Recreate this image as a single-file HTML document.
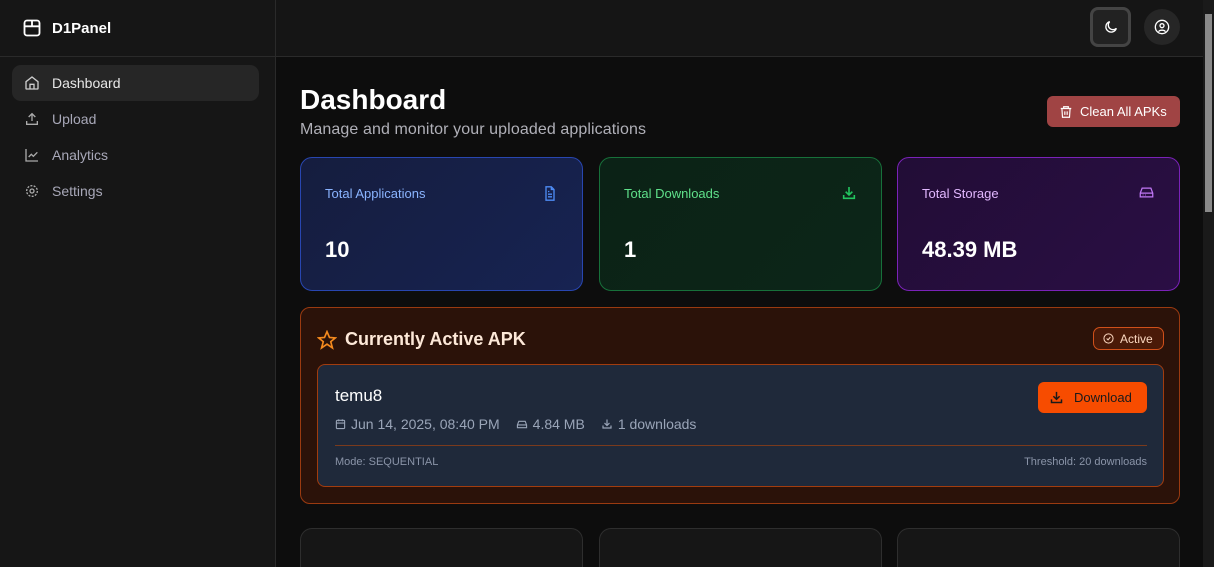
<!DOCTYPE html>
<html><head><meta charset="utf-8"><style>
*{box-sizing:border-box;margin:0;padding:0}
html,body{width:1214px;height:567px;overflow:hidden}
body{background:#0d0d0d;font-family:"Liberation Sans",sans-serif;color:#fff;position:relative}
svg{display:block}
.side{position:absolute;left:0;top:0;width:276px;height:567px;background:#161616;border-right:1px solid #2a2a2a}
.logo{height:57px;border-bottom:1px solid #2a2a2a;display:flex;align-items:center;padding-left:22px;font-weight:bold;font-size:15px;gap:10px}
.nav{padding:8px 12px}
.ni{height:36px;display:flex;align-items:center;padding-left:12px;gap:12px;font-size:14px;color:#a8a8b8;border-radius:9px}
.ni.act{background:#262626;color:#e8e8e8;width:247px}
.top{position:absolute;left:276px;top:0;right:11px;height:57px;background:#151515;border-bottom:1px solid #2a2a2a}
.sb{position:absolute;right:0;top:0;width:11px;height:567px;background:#1a1a1a}
.sb div{position:absolute;left:2px;top:14px;width:7px;height:198px;background:#8a8a8a}
.card{position:absolute;top:157px;width:283px;height:134px;border-radius:12px;padding:28px 24px}
.card .l{font-size:13px}
.card .v{font-size:22px;font-weight:bold;margin-top:36px}
.card svg{position:absolute;right:24px;top:27px}
.meta{display:flex;align-items:center;gap:5px}
</style></head><body>
<div class="side">
 <div class="logo"><svg width="20" height="20" viewBox="0 0 24 24" fill="none" stroke="#fff" stroke-width="2.2"><rect x="3" y="3" width="18" height="18" rx="3"/><path d="M3 10h18M12 3v7"/></svg>D1Panel</div>
 <div class="nav">
  <div class="ni act"><svg width="16" height="16" viewBox="0 0 24 24" fill="none" stroke="#ccc" stroke-width="2"><path d="M3 10l9-7 9 7v10a1 1 0 0 1-1 1H4a1 1 0 0 1-1-1z"/><path d="M9 21v-7h6v7"/></svg>Dashboard</div>
  <div class="ni"><svg width="16" height="16" viewBox="0 0 24 24" fill="none" stroke="#aaa" stroke-width="2"><path d="M4 15v5h16v-5M12 15V4M7 9l5-5 5 5"/></svg>Upload</div>
  <div class="ni"><svg width="16" height="16" viewBox="0 0 24 24" fill="none" stroke="#aaa" stroke-width="2"><path d="M3 3v18h18M7 15l4-4 3 3 6-6"/></svg>Analytics</div>
  <div class="ni"><svg width="16" height="16" viewBox="0 0 24 24" fill="none" stroke="#aaa" stroke-width="2"><circle cx="12" cy="12" r="3"/><circle cx="12" cy="12" r="8" stroke-dasharray="3 2"/></svg>Settings</div>
 </div>
</div>
<div class="top">
 <div style="position:absolute;left:814px;top:7px;width:41px;height:40px;border:3px solid #444;border-radius:8px;background:#222;display:flex;align-items:center;justify-content:center"><svg width="16" height="16" viewBox="0 0 24 24" fill="none" stroke="#fff" stroke-width="2"><path d="M20 14A8 8 0 1 1 10 4a6 6 0 0 0 10 10z"/></svg></div>
 <div style="position:absolute;left:868px;top:9px;width:36px;height:36px;border-radius:50%;background:#262626;display:flex;align-items:center;justify-content:center"><svg width="16" height="16" viewBox="0 0 24 24" fill="none" stroke="#fff" stroke-width="2"><circle cx="12" cy="12" r="10"/><circle cx="12" cy="10" r="3"/><path d="M7 19c1-3 9-3 10 0"/></svg></div>
</div>
<div class="sb"><div></div></div>
<div style="position:absolute;left:300px;top:84px;font-size:28px;font-weight:bold">Dashboard</div>
<div style="position:absolute;left:300px;top:121px;font-size:16px;color:#b0b0b8;letter-spacing:0.1px">Manage and monitor your uploaded applications</div>
<div style="position:absolute;left:1047px;top:96px;width:133px;height:31px;background:#a04444;border-radius:6px;display:flex;align-items:center;padding-left:12px;gap:7px;font-size:13px;white-space:nowrap"><svg width="14" height="14" viewBox="0 0 24 24" fill="none" stroke="#fff" stroke-width="2"><path d="M3 6h18M8 6V3h8v3M5 6l1 15h12l1-15M10 11v6M14 11v6"/></svg>Clean All APKs</div>
<div class="card" style="left:300px;background:linear-gradient(135deg,#151d3e,#172352);border:1px solid #2846b0"><div class="l" style="color:#8ab4ff">Total Applications</div><div class="v">10</div><svg width="16" height="17" viewBox="0 0 24 24" fill="none" stroke="#4d8cf5" stroke-width="2"><path d="M14 2H6v20h12V6zM14 2v4h4M9 13h6M9 17h6M9 9h2"/></svg></div>
<div class="card" style="left:599px;background:linear-gradient(135deg,#0b2216,#0c2618);border:1px solid #17703a"><div class="l" style="color:#5fe08a">Total Downloads</div><div class="v">1</div><svg width="16" height="16" viewBox="0 0 24 24" fill="none" stroke="#22c55e" stroke-width="2.4"><path d="M4 15v5h16v-5M12 3v12M7 10l5 5 5-5"/></svg></div>
<div class="card" style="left:897px;background:linear-gradient(135deg,#220d36,#2a0e44);border:1px solid #7a22b8"><div class="l" style="color:#e2b8ff">Total Storage</div><div class="v">48.39 MB</div><svg width="17" height="15" viewBox="0 0 24 24" fill="none" stroke="#c077f5" stroke-width="2"><path d="M2 13l3-8h14l3 8v6H2zM2 13h20M6 16h1M10 16h1"/></svg></div>
<div style="position:absolute;left:300px;top:307px;width:880px;height:197px;background:#2b1209;border:1px solid #9a3a10;border-radius:10px">
 <div style="position:absolute;left:16px;top:21px;display:flex;gap:8px;align-items:center;font-size:18px;font-weight:bold;color:#fde8d8"><svg width="20" height="20" viewBox="0 0 24 24" fill="none" stroke="#f58a1e" stroke-width="2"><path d="M12 2l3 7 7 .5-5.5 4.5 2 7.5L12 17l-6.5 4.5 2-7.5L2 9.5 9 9z"/></svg>Currently Active APK</div>
 <div style="position:absolute;left:792px;top:19px;width:71px;height:23px;border:1px solid #d0501a;background:#4a1a08;border-radius:7px;display:flex;align-items:center;gap:6px;padding-left:9px;font-size:12px;color:#fcd8c0"><svg width="11" height="11" viewBox="0 0 24 24" fill="none" stroke="#fcd8c0" stroke-width="2.2"><circle cx="12" cy="12" r="10"/><path d="M8 12l3 3 5-6"/></svg>Active</div>
 <div style="position:absolute;left:16px;top:56px;width:847px;height:123px;background:#1f293a;border:1px solid #a23c0e;border-radius:8px">
  <div style="position:absolute;left:17px;top:21px;font-size:17px">temu8</div>
  <div style="position:absolute;left:17px;top:51px;font-size:14px;color:#9aa5b8;display:flex;gap:16px">
   <span class="meta"><svg width="11" height="12" viewBox="0 0 24 24" fill="none" stroke="#9aa5b8" stroke-width="2.4"><rect x="3" y="4" width="18" height="18" rx="2"/><path d="M3 10h18M8 2v4M16 2v4"/></svg>Jun 14, 2025, 08:40 PM</span>
   <span class="meta"><svg width="12" height="11" viewBox="0 0 24 24" fill="none" stroke="#9aa5b8" stroke-width="2.4"><path d="M2 13l3-8h14l3 8v6H2zM2 13h20"/></svg>4.84 MB</span>
   <span class="meta"><svg width="12" height="12" viewBox="0 0 24 24" fill="none" stroke="#9aa5b8" stroke-width="2.4"><path d="M4 15v5h16v-5M12 3v12M7 10l5 5 5-5"/></svg>1 downloads</span></div>
  <div style="position:absolute;left:17px;right:16px;top:80px;border-top:1px solid #7a3a1c"></div>
  <div style="position:absolute;left:17px;top:91px;font-size:11px;color:#8a94a8">Mode: SEQUENTIAL</div>
  <div style="position:absolute;right:16px;top:91px;font-size:11px;color:#8a94a8">Threshold: 20 downloads</div>
  <div style="position:absolute;left:720px;top:17px;width:109px;height:31px;background:#f74c00;border-radius:6px;display:flex;align-items:center;gap:10px;padding-left:11px;font-size:13px;color:#1a1a1a;white-space:nowrap"><svg width="15" height="15" viewBox="0 0 24 24" fill="none" stroke="#1a1a1a" stroke-width="2.4"><path d="M4 15v5h16v-5M12 3v12M7 10l5 5 5-5"/></svg>Download</div>
 </div>
</div>
<div style="position:absolute;left:300px;top:528px;width:283px;height:39px;border:1px solid #2e2e2e;border-bottom:none;background:#161616;border-radius:12px 12px 0 0"></div>
<div style="position:absolute;left:599px;top:528px;width:283px;height:39px;border:1px solid #2e2e2e;border-bottom:none;background:#161616;border-radius:12px 12px 0 0"></div>
<div style="position:absolute;left:897px;top:528px;width:283px;height:39px;border:1px solid #2e2e2e;border-bottom:none;background:#161616;border-radius:12px 12px 0 0"></div>
</body></html>
